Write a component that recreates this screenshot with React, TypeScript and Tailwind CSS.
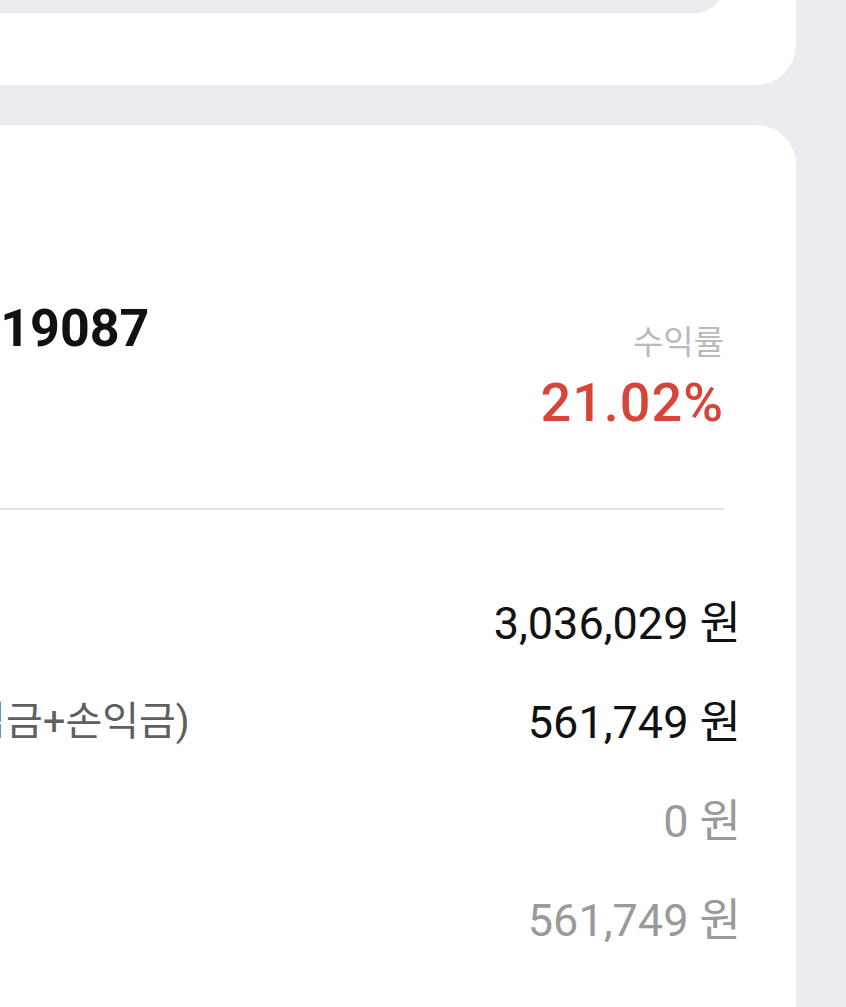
const rows = [
  { label: "원금", value: "3,036,029", tone: "text-[#111111]" },
  { label: "평가금(입금+손익금)", value: "561,749", tone: "text-[#111111]" },
  { label: "출금", value: "0", tone: "text-[#9a9a9a]" },
  { label: "잔액", value: "561,749", tone: "text-[#9a9a9a]" },
];

export default function App() {
  return (
    <div
      className="h-[1007px] w-full overflow-hidden bg-[#ebecf0] pr-[50px]"
      style={{ fontFamily: "Roboto, 'Noto Sans CJK KR', sans-serif" }}
    >
      {/* top card, mostly scrolled away */}
      <div className="-mt-[115px] ml-[-400px] h-[200px] rounded-[40px] bg-white pr-[71px] pt-[28px]">
        <div className="h-[100px] rounded-[30px] bg-[#ebecf0]" />
      </div>

      {/* account card */}
      <div className="mt-[40px] ml-[-400px] rounded-t-[40px] bg-white pb-[200px] pl-[245px] pr-[55px] pt-[178px]">
        <div className="mr-[17px] flex items-start justify-between">
          <p className="-ml-[49px] whitespace-nowrap text-[52px] font-bold leading-none text-[#111111]">
            계좌번호 19087
          </p>
          <div className="mt-[23px] flex flex-col items-end">
            <span className="text-[33px] leading-none text-[#bababa]">수익률</span>
            <span className="mt-[17px] text-[54px] font-medium leading-none tracking-[1px] text-[#d6443a]">
              21.02%
            </span>
          </div>
        </div>

        <div className="mr-[17px] mt-[78px] h-[2px] bg-[#e2e2e2]" />

        <div className="mt-[90px] flex flex-col gap-[53px]">
          {rows.map((r) => (
            <div key={r.value + r.label} className="flex h-[46px] items-center justify-between">
              <span className="whitespace-nowrap text-[40px] leading-none text-[#5f5f5f]">
                {r.label}
              </span>
              <span className={`whitespace-nowrap text-[45px] leading-none ${r.tone}`}>
                {r.value} 원
              </span>
            </div>
          ))}
        </div>
      </div>
    </div>
  );
}
